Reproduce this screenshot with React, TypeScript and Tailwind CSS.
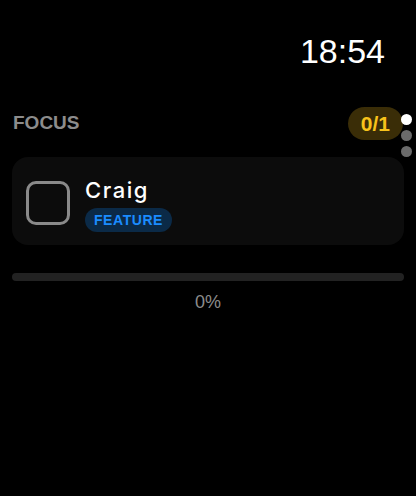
export default function App() {
  return (
    <div
      className="relative w-[416px] h-[496px] bg-black overflow-hidden px-3 flex flex-col"
      style={{ fontFamily: '"Liberation Sans", Arial, sans-serif' }}
    >
      {/* status time */}
      <div className="pt-[31px] pr-[19px] text-right text-[34px] leading-[40px] text-white">
        18:54
      </div>

      {/* header */}
      <div className="mt-[36px] flex items-center justify-between pl-px pr-px">
        <span className="text-[19px] font-bold text-[#8c8c8c]">FOCUS</span>
        <span className="h-[33px] px-[13px] rounded-full bg-[#3a2d07] text-[#f7c21b] text-[21px] font-bold leading-[33px]">
          0/1
        </span>
      </div>

      {/* task card */}
      <div className="mt-[17px] h-[88px] rounded-2xl bg-[#0c0c0c] flex items-center pl-[14px] gap-[15px]">
        <div className="w-[44px] h-[44px] mt-[4px] rounded-[10px] border-[3px] border-[#8a8a8a]" />
        <div className="flex flex-col items-start mt-[6px]">
          <span
            className="text-[22px] leading-[28px] font-medium tracking-[0.07em] text-white"
            style={{ fontFamily: 'Inter, "Liberation Sans", sans-serif' }}
          >
            Craig
          </span>
          <span className="mt-[4px] h-[24px] px-[9px] rounded-full bg-[#0b2a47] text-[#1b8cff] text-[14px] font-bold tracking-[0.04em] leading-[24px]">
            FEATURE
          </span>
        </div>
      </div>

      {/* progress */}
      <div className="mt-[28px] h-[8px] rounded-full bg-[#222222]" />
      <div className="mt-[10px] text-center text-[18px] leading-[22px] text-[#8c8c8c]">0%</div>

      {/* page indicator */}
      <div className="absolute right-[4px] top-[114px] flex flex-col gap-[5px]">
        <span className="w-[11px] h-[11px] rounded-full bg-white" />
        <span className="w-[11px] h-[11px] rounded-full bg-[#6b6b6b]" />
        <span className="w-[11px] h-[11px] rounded-full bg-[#6b6b6b]" />
      </div>
    </div>
  );
}
